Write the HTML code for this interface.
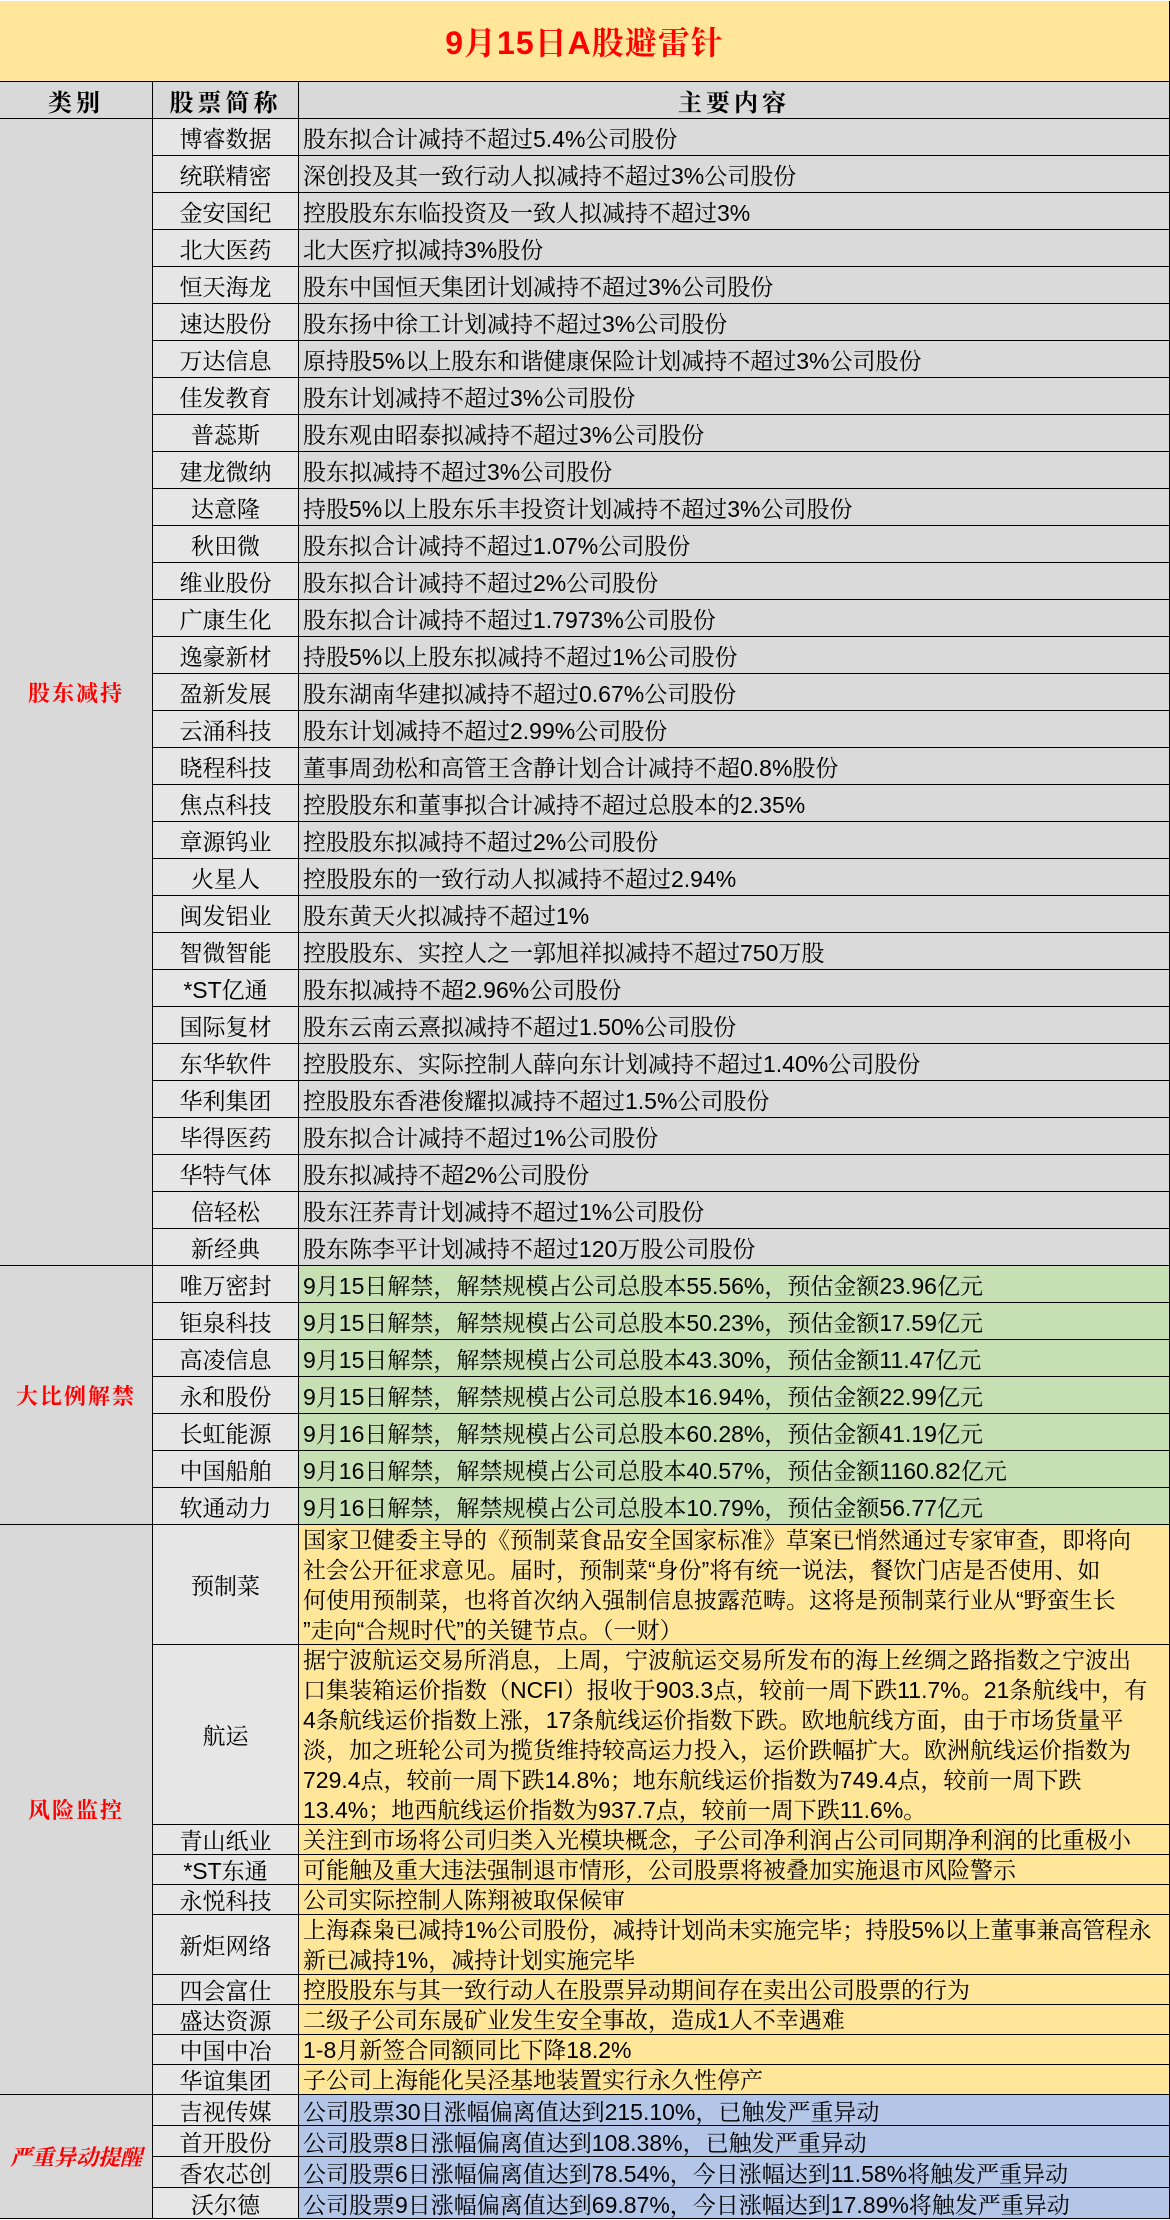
<!DOCTYPE html>
<html><head><meta charset="utf-8">
<style>
*{margin:0;padding:0;box-sizing:border-box}
body{width:1170px;height:2220px;background:#fff;overflow:hidden;font-family:"Liberation Sans Narrow","Liberation Sans","Noto Serif CJK SC",serif;color:#000}
.g{position:absolute;left:0;top:1px;width:1170px;display:grid;grid-template-columns:153px 146px 871px;
grid-template-rows:81px 37px repeat(31,37px) repeat(7,37px) 120px 180px 30px 30px 30px 60px 30px 30px 30px 30px 31px 31px 31px 31px;}
.g>div{border-right:1.5px solid #000;border-bottom:1.5px solid #000;display:flex;align-items:center;font-size:23px;letter-spacing:0;white-space:nowrap;overflow:hidden}
.t{grid-column:1/4;background:#ffe699;justify-content:center;color:#f00;font-size:32px!important;font-weight:bold;letter-spacing:1px!important;font-family:"Liberation Sans","Noto Serif CJK SC",serif}
.h{background:#d9d9d9;justify-content:center;font-weight:bold;font-size:24px!important;letter-spacing:4px!important}
.c{background:#d9d9d9;justify-content:center;color:#f00;font-weight:bold;font-size:22px!important;letter-spacing:2px!important}
.n{background:#e7e6e6;justify-content:center}
.x{padding-left:4px}
.s1{background:#dadada}
.s2{background:#c6e0b4}
.s3{background:#ffe699;line-height:30px}
.s4{background:#b4c6e7}
</style></head><body>
<div class="g">
<div class="t">9月15日A股避雷针</div>
<div class="h">类别</div><div class="h">股票简称</div><div class="h">主要内容</div>

<div class="c" style="grid-column:1;grid-row:3/span 31">股东减持</div>
<div class="n">博睿数据</div><div class="x s1">股东拟合计减持不超过5.4%公司股份</div>
<div class="n">统联精密</div><div class="x s1">深创投及其一致行动人拟减持不超过3%公司股份</div>
<div class="n">金安国纪</div><div class="x s1">控股股东东临投资及一致人拟减持不超过3%</div>
<div class="n">北大医药</div><div class="x s1">北大医疗拟减持3%股份</div>
<div class="n">恒天海龙</div><div class="x s1">股东中国恒天集团计划减持不超过3%公司股份</div>
<div class="n">速达股份</div><div class="x s1">股东扬中徐工计划减持不超过3%公司股份</div>
<div class="n">万达信息</div><div class="x s1">原持股5%以上股东和谐健康保险计划减持不超过3%公司股份</div>
<div class="n">佳发教育</div><div class="x s1">股东计划减持不超过3%公司股份</div>
<div class="n">普蕊斯</div><div class="x s1">股东观由昭泰拟减持不超过3%公司股份</div>
<div class="n">建龙微纳</div><div class="x s1">股东拟减持不超过3%公司股份</div>
<div class="n">达意隆</div><div class="x s1">持股5%以上股东乐丰投资计划减持不超过3%公司股份</div>
<div class="n">秋田微</div><div class="x s1">股东拟合计减持不超过1.07%公司股份</div>
<div class="n">维业股份</div><div class="x s1">股东拟合计减持不超过2%公司股份</div>
<div class="n">广康生化</div><div class="x s1">股东拟合计减持不超过1.7973%公司股份</div>
<div class="n">逸豪新材</div><div class="x s1">持股5%以上股东拟减持不超过1%公司股份</div>
<div class="n">盈新发展</div><div class="x s1">股东湖南华建拟减持不超过0.67%公司股份</div>
<div class="n">云涌科技</div><div class="x s1">股东计划减持不超过2.99%公司股份</div>
<div class="n">晓程科技</div><div class="x s1">董事周劲松和高管王含静计划合计减持不超0.8%股份</div>
<div class="n">焦点科技</div><div class="x s1">控股股东和董事拟合计减持不超过总股本的2.35%</div>
<div class="n">章源钨业</div><div class="x s1">控股股东拟减持不超过2%公司股份</div>
<div class="n">火星人</div><div class="x s1">控股股东的一致行动人拟减持不超过2.94%</div>
<div class="n">闽发铝业</div><div class="x s1">股东黄天火拟减持不超过1%</div>
<div class="n">智微智能</div><div class="x s1">控股股东、实控人之一郭旭祥拟减持不超过750万股</div>
<div class="n">*ST亿通</div><div class="x s1">股东拟减持不超2.96%公司股份</div>
<div class="n">国际复材</div><div class="x s1">股东云南云熹拟减持不超过1.50%公司股份</div>
<div class="n">东华软件</div><div class="x s1">控股股东、实际控制人薛向东计划减持不超过1.40%公司股份</div>
<div class="n">华利集团</div><div class="x s1">控股股东香港俊耀拟减持不超过1.5%公司股份</div>
<div class="n">毕得医药</div><div class="x s1">股东拟合计减持不超过1%公司股份</div>
<div class="n">华特气体</div><div class="x s1">股东拟减持不超2%公司股份</div>
<div class="n">倍轻松</div><div class="x s1">股东汪荞青计划减持不超过1%公司股份</div>
<div class="n">新经典</div><div class="x s1">股东陈李平计划减持不超过120万股公司股份</div>

<div class="c" style="grid-column:1;grid-row:34/span 7">大比例解禁</div>
<div class="n">唯万密封</div><div class="x s2">9月15日解禁，解禁规模占公司总股本55.56%，预估金额23.96亿元</div>
<div class="n">钜泉科技</div><div class="x s2">9月15日解禁，解禁规模占公司总股本50.23%，预估金额17.59亿元</div>
<div class="n">高凌信息</div><div class="x s2">9月15日解禁，解禁规模占公司总股本43.30%，预估金额11.47亿元</div>
<div class="n">永和股份</div><div class="x s2">9月15日解禁，解禁规模占公司总股本16.94%，预估金额22.99亿元</div>
<div class="n">长虹能源</div><div class="x s2">9月16日解禁，解禁规模占公司总股本60.28%，预估金额41.19亿元</div>
<div class="n">中国船舶</div><div class="x s2">9月16日解禁，解禁规模占公司总股本40.57%，预估金额1160.82亿元</div>
<div class="n">软通动力</div><div class="x s2">9月16日解禁，解禁规模占公司总股本10.79%，预估金额56.77亿元</div>

<div class="c" style="grid-column:1;grid-row:41/span 10">风险监控</div>
<div class="n">预制菜</div><div class="x s3">国家卫健委主导的《预制菜食品安全国家标准》草案已悄然通过专家审查，即将向<br>社会公开征求意见。届时，预制菜“身份”将有统一说法，餐饮门店是否使用、如<br>何使用预制菜，也将首次纳入强制信息披露范畴。这将是预制菜行业从“野蛮生长<br>”走向“合规时代”的关键节点。（一财）</div>
<div class="n">航运</div><div class="x s3">据宁波航运交易所消息，上周，宁波航运交易所发布的海上丝绸之路指数之宁波出<br>口集装箱运价指数（NCFI）报收于903.3点，较前一周下跌11.7%。21条航线中，有<br>4条航线运价指数上涨，17条航线运价指数下跌。欧地航线方面，由于市场货量平<br>淡，加之班轮公司为揽货维持较高运力投入，运价跌幅扩大。欧洲航线运价指数为<br>729.4点，较前一周下跌14.8%；地东航线运价指数为749.4点，较前一周下跌<br>13.4%；地西航线运价指数为937.7点，较前一周下跌11.6%。</div>
<div class="n">青山纸业</div><div class="x s3">关注到市场将公司归类入光模块概念，子公司净利润占公司同期净利润的比重极小</div>
<div class="n">*ST东通</div><div class="x s3">可能触及重大违法强制退市情形，公司股票将被叠加实施退市风险警示</div>
<div class="n">永悦科技</div><div class="x s3">公司实际控制人陈翔被取保候审</div>
<div class="n">新炬网络</div><div class="x s3">上海森枭已减持1%公司股份，减持计划尚未实施完毕；持股5%以上董事兼高管程永<br>新已减持1%，减持计划实施完毕</div>
<div class="n">四会富仕</div><div class="x s3">控股股东与其一致行动人在股票异动期间存在卖出公司股票的行为</div>
<div class="n">盛达资源</div><div class="x s3">二级子公司东晟矿业发生安全事故，造成1人不幸遇难</div>
<div class="n">中国中冶</div><div class="x s3">1-8月新签合同额同比下降18.2%</div>
<div class="n">华谊集团</div><div class="x s3">子公司上海能化吴泾基地装置实行永久性停产</div>

<div class="c" style="grid-column:1;grid-row:51/span 4;font-style:italic;letter-spacing:0!important">严重异动提醒</div>
<div class="n">吉视传媒</div><div class="x s4">公司股票30日涨幅偏离值达到215.10%，已触发严重异动</div>
<div class="n">首开股份</div><div class="x s4">公司股票8日涨幅偏离值达到108.38%，已触发严重异动</div>
<div class="n">香农芯创</div><div class="x s4">公司股票6日涨幅偏离值达到78.54%，今日涨幅达到11.58%将触发严重异动</div>
<div class="n">沃尔德</div><div class="x s4">公司股票9日涨幅偏离值达到69.87%，今日涨幅达到17.89%将触发严重异动</div>
</div>
</body></html>
